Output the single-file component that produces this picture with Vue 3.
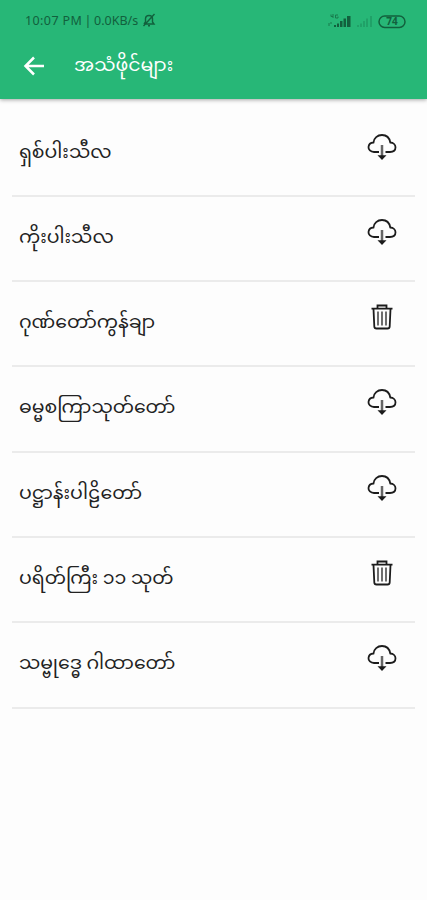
<script setup>
import { ref } from 'vue'

const title = 'အသံဖိုင်များ'

const files = ref([
  { id: 1, name: 'ရှစ်ပါးသီလ', downloaded: false },
  { id: 2, name: 'ကိုးပါးသီလ', downloaded: false },
  { id: 3, name: 'ဂုဏ်တော်ကွန်ချာ', downloaded: true },
  { id: 4, name: 'ဓမ္မစကြာသုတ်တော်', downloaded: false },
  { id: 5, name: 'ပဋ္ဌာန်းပါဠိတော်', downloaded: false },
  { id: 6, name: 'ပရိတ်ကြီး ၁၁ သုတ်', downloaded: true },
  { id: 7, name: 'သမ္ဗုဒ္ဓေ ဂါထာတော်', downloaded: false }
])

const toggle = (file) => {
  file.downloaded = !file.downloaded
}
</script>

<template>
  <div class="screen">
    <header class="header">
      <div class="status">
        <span class="status__time">10:07 PM</span>
        <span class="status__divider">|</span>
        <span class="status__speed">0.0KB/s</span>
        <svg class="status__bell" viewBox="0 0 14 14">
          <path d="M2 11h10L10.5 9V5.5Q10.3 2.5 7 2.5T3.5 5.5V9L2 11M6 12.7h2M1.5 13L12.5 1" />
        </svg>
        <svg class="status__signals" viewBox="0 0 80 16">
          <g class="status__network">
            <path d="M4 1.5v2h2M6 1v4M11 2H8.5v3H11V3.5M2 10v3M4 9v2" />
          </g>
          <path class="status__bars" d="M7 12h2v2H7zM10 10.5h2V14h-2zM13 8h2.5v6H13zM16.5 5.5H19V14h-2.5zM20 3h3.5v11H20z" />
          <path class="status__bars status__bars--off" d="M30 12h2v2h-2zM33 10.5h2V14h-2zM36 8h2v6h-2zM39 5.5h2V14h-2zM43 3h2v11h-2z" />
          <rect class="status__battery" x="52" y="3" width="26" height="11.5" rx="5.7" />
          <text class="status__level" x="65" y="12.3">74</text>
        </svg>
      </div>
      <div class="toolbar">
        <button class="toolbar__back" aria-label="Back">
          <svg viewBox="0 0 22 20">
            <path d="M21 10H2.5M11 1.5L2.5 10L11 18.5" />
          </svg>
        </button>
        <h1 class="toolbar__title">{{ title }}</h1>
      </div>
    </header>

    <ul class="list">
      <li v-for="file in files" :key="file.id" class="row">
        <span class="row__name">{{ file.name }}</span>
        <button class="row__action" :aria-label="file.downloaded ? 'Delete' : 'Download'" @click="toggle(file)">
          <svg v-if="file.downloaded" viewBox="0 0 30 30">
            <path class="trash__body" d="M6.5 6L7.3 23.5Q7.4 25.5 9.5 25.5H20.5Q22.6 25.5 22.7 23.5L23.5 6" />
            <path class="trash__lid" d="M4.5 5.7H25.5M10.5 5V2.5H19.5V5" />
            <path class="trash__lines" d="M11 8.5V22.5M15 8.5V22.5M19 8.5V22.5" />
          </svg>
          <svg v-else viewBox="0 0 30 30">
            <path class="cloud" d="M12 19H7C3.5 19 1.3 16.5 1.5 14C1.7 11.3 3.8 9.7 6.5 9.5C6.8 5 10.5 2 15 2C19.5 2 22.5 5 23.3 9.5C26.5 9.7 28.5 12 28.5 14.3C28.5 17 26.5 19 23 19H18.5" />
            <path class="cloud__stem" d="M15 12V23.5" />
            <path class="cloud__head" d="M10.5 22.3H19.5L15 27Z" />
          </svg>
        </button>
      </li>
    </ul>
  </div>
</template>

<style>
body {
  background: #fdfdfd;
}
</style>

<style scoped>
.screen {
  min-height: 900px;
  background: #fdfdfd;
  font-family: Roboto, 'Noto Sans Myanmar', 'Noto Sans', sans-serif;
}

.header {
  height: 99px;
  background: #27b777;
  box-shadow: 0 1px 4px rgba(0, 0, 0, 0.35);
}

.status {
  display: flex;
  align-items: center;
  height: 40px;
  padding: 0 20px 0 25px;
  color: #12603d;
  font-family: 'Noto Sans', sans-serif;
  font-size: 12.5px;
  white-space: nowrap;
}

.status__time {
  width: 57px;
  letter-spacing: 0.4px;
}

.status__divider {
  width: 12px;
  text-align: center;
}

.status__speed {
  width: 44px;
}

.status__bell {
  width: 14px;
  height: 14px;
  margin-left: 4px;
  fill: none;
  stroke: #12603d;
  stroke-width: 1.4;
}

.status__signals {
  width: 80px;
  height: 16px;
  margin-top: 1px;
  margin-left: auto;
}

.status__network {
  fill: none;
  stroke: #187b4d;
  stroke-width: 1;
}

.status__bars {
  fill: #12603d;
}

.status__bars--off {
  fill: #20a168;
}

.status__battery {
  fill: none;
  stroke: #12603d;
  stroke-width: 1.5;
}

.status__level {
  fill: #12603d;
  font-size: 10px;
  font-weight: 700;
  text-anchor: middle;
}

.toolbar {
  display: flex;
  align-items: center;
  height: 52px;
  padding-left: 23px;
}

.toolbar__back {
  width: 22px;
  height: 20px;
  padding: 0;
  border: none;
  background: none;
}

.toolbar__back svg {
  display: block;
  fill: none;
  stroke: #ffffff;
  stroke-width: 2.5;
}

.toolbar__title {
  margin: 0 0 2px 29px;
  color: #ffffff;
  font-size: 18.9px;
  font-weight: 400;
  line-height: 40px;
  white-space: nowrap;
}

.list {
  margin: 0;
  padding: 12.5px 12px 0;
  list-style: none;
}

.row {
  display: flex;
  align-items: flex-start;
  justify-content: space-between;
  box-sizing: border-box;
  height: 85.3px;
  padding: 19px 18px 0 7px;
  border-bottom: 2px solid #ebebeb;
}

.row__name {
  color: #222222;
  font-size: 18.9px;
  line-height: 41px;
  white-space: nowrap;
}

.row__action {
  width: 30px;
  height: 30px;
  margin-top: 2px;
  padding: 0;
  border: none;
  background: none;
}

.row__action svg {
  display: block;
  width: 30px;
  height: 30px;
}

.cloud,
.trash__body,
.trash__lid {
  fill: none;
  stroke: #1c1c1c;
  stroke-width: 1.8;
}

.cloud__stem {
  fill: none;
  stroke: #666666;
  stroke-width: 2.5;
}

.cloud__head {
  fill: #1c1c1c;
}

.trash__lines {
  fill: none;
  stroke: #555555;
  stroke-width: 1.7;
}
</style>
